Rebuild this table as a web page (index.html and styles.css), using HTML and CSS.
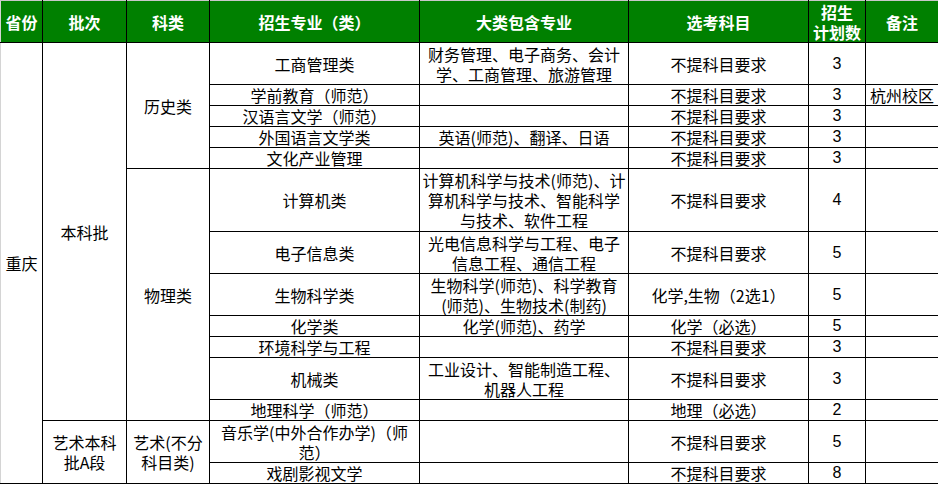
FILE: index.html
```html
<!DOCTYPE html>
<html lang="zh-CN">
<head>
<meta charset="utf-8">
<title>招生计划</title>
<link rel="stylesheet" href="styles.css">
</head>
<body>
<table class="plan">
  <colgroup>
    <col class="c-prov"><col class="c-batch"><col class="c-type"><col class="c-major"><col class="c-sub"><col class="c-exam"><col class="c-num"><col class="c-note">
  </colgroup>
  <thead>
    <tr class="h2">
      <th class="first">省份</th>
      <th>批次</th>
      <th>科类</th>
      <th>招生专业（类）</th>
      <th>大类包含专业</th>
      <th>选考科目</th>
      <th>招生<br>计划数</th>
      <th>备注</th>
    </tr>
  </thead>
  <tbody>
    <tr class="h2">
      <td class="first" rowspan="14">重庆</td>
      <td rowspan="12">本科批</td>
      <td rowspan="5">历史类</td>
      <td>工商管理类</td>
      <td>财务管理、电子商务、会计<br>学、工商管理、旅游管理</td>
      <td>不提科目要求</td>
      <td class="num">3</td>
      <td></td>
    </tr>
    <tr class="h1">
      <td>学前教育（师范）</td>
      <td></td>
      <td>不提科目要求</td>
      <td class="num">3</td>
      <td>杭州校区</td>
    </tr>
    <tr class="h1">
      <td>汉语言文学（师范）</td>
      <td></td>
      <td>不提科目要求</td>
      <td class="num">3</td>
      <td></td>
    </tr>
    <tr class="h1">
      <td>外国语言文学类</td>
      <td>英语(师范)、翻译、日语</td>
      <td>不提科目要求</td>
      <td class="num">3</td>
      <td></td>
    </tr>
    <tr class="h1">
      <td>文化产业管理</td>
      <td></td>
      <td>不提科目要求</td>
      <td class="num">3</td>
      <td></td>
    </tr>
    <tr class="h3">
      <td rowspan="7">物理类</td>
      <td>计算机类</td>
      <td>计算机科学与技术(师范)、计<br>算机科学与技术、智能科学<br>与技术、软件工程</td>
      <td>不提科目要求</td>
      <td class="num">4</td>
      <td></td>
    </tr>
    <tr class="h2">
      <td>电子信息类</td>
      <td>光电信息科学与工程、电子<br>信息工程、通信工程</td>
      <td>不提科目要求</td>
      <td class="num">5</td>
      <td></td>
    </tr>
    <tr class="h2">
      <td>生物科学类</td>
      <td>生物科学(师范)、科学教育<br>(师范)、生物技术(制药)</td>
      <td>化学,生物（2选1）</td>
      <td class="num">5</td>
      <td></td>
    </tr>
    <tr class="h1">
      <td>化学类</td>
      <td>化学(师范)、药学</td>
      <td>化学（必选）</td>
      <td class="num">5</td>
      <td></td>
    </tr>
    <tr class="h1">
      <td>环境科学与工程</td>
      <td></td>
      <td>不提科目要求</td>
      <td class="num">3</td>
      <td></td>
    </tr>
    <tr class="h2">
      <td>机械类</td>
      <td>工业设计、智能制造工程、<br>机器人工程</td>
      <td>不提科目要求</td>
      <td class="num">3</td>
      <td></td>
    </tr>
    <tr class="h1">
      <td>地理科学（师范）</td>
      <td></td>
      <td>地理（必选）</td>
      <td class="num">2</td>
      <td></td>
    </tr>
    <tr class="h2">
      <td rowspan="2">艺术本科<br>批A段</td>
      <td rowspan="2">艺术(不分<br>科目类)</td>
      <td>音乐学(中外合作办学)（师<br>范）</td>
      <td></td>
      <td>不提科目要求</td>
      <td class="num">5</td>
      <td></td>
    </tr>
    <tr class="h1">
      <td>戏剧影视文学</td>
      <td></td>
      <td>不提科目要求</td>
      <td class="num">8</td>
      <td></td>
    </tr>
  </tbody>
</table>
</body>
</html>
```

FILE: styles.css
```css
html, body {
  margin: 0;
  padding: 0;
  background: #fff;
}

.plan {
  border-collapse: collapse;
  table-layout: fixed;
  width: 938px;
  font-family: "Noto Sans CJK SC", sans-serif;
  font-size: 16px;
  color: #000;
}

.c-prov { width: 42px; }
.c-batch { width: 84px; }
.c-type { width: 83px; }
.c-major { width: 210px; }
.c-sub { width: 209px; }
.c-exam { width: 180px; }
.c-num { width: 57px; }
.c-note { width: 73px; }

.plan th,
.plan td {
  border: 1px solid #000;
  padding: 0 1px;
  text-align: center;
  vertical-align: middle;
  line-height: 20px;
  white-space: nowrap;
  overflow: hidden;
}

.plan th {
  background: #008000;
  color: #fff;
  font-weight: bold;
  border-top: 1px solid #c8c8c8;
}

.plan .first {
  border-left: 1px solid #d4d4d4;
}

.plan .num {
  font-family: "Liberation Sans", sans-serif;
}

.h1 { height: 21px; }
.h2 { height: 42px; }
.h3 { height: 63px; }
```
